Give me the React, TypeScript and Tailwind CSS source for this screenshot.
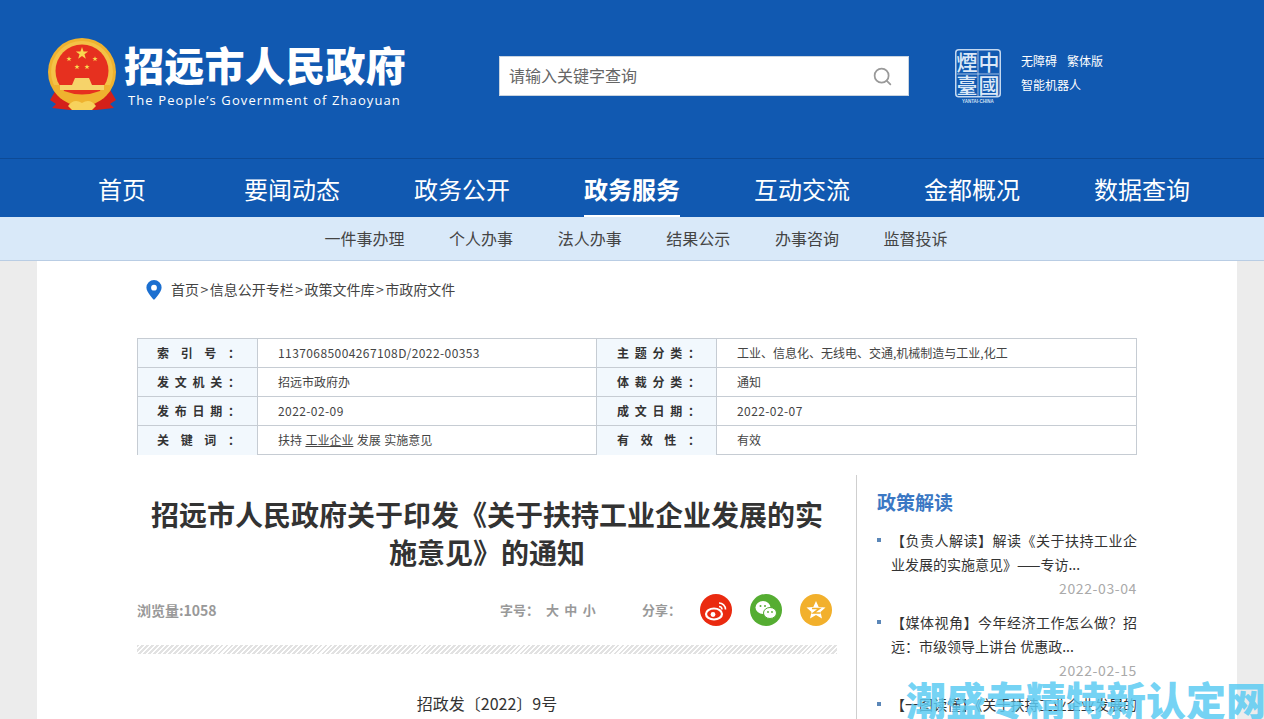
import type { ReactNode } from "react";
import { Search } from "lucide-react";

const nav = ["首页", "要闻动态", "政务公开", "政务服务", "互动交流", "金都概况", "数据查询"];
const sub = ["一件事办理", "个人办事", "法人办事", "结果公示", "办事咨询", "监督投诉"];
const crumbs = ["首页", "信息公开专栏", "政策文件库", "市政府文件"];

function Emblem() {
  const star = (cx: number, cy: number, r: number) => {
    const pts: string[] = [];
    for (let i = 0; i < 10; i++) {
      const a = -Math.PI / 2 + (i * Math.PI) / 5;
      const rr = i % 2 ? r * 0.4 : r;
      pts.push(`${cx + rr * Math.cos(a)},${cy + rr * Math.sin(a)}`);
    }
    return <polygon points={pts.join(" ")} fill="#f9d84f" />;
  };
  return (
    <svg width="70" height="74" viewBox="0 0 70 74" className="shrink-0">
      <path d="M9 50 L2 62 L8 66 L4 70 L22 72 L48 72 L66 70 L62 66 L68 62 L61 50 Z" fill="#d4201a" />
      <circle cx="34" cy="34" r="34" fill="#efb22f" />
      <circle cx="34" cy="34" r="31" fill="#f7cf5b" opacity="0.55" />
      <circle cx="34" cy="33" r="26.500" fill="#e6301f" />
      <path d="M6 47 H62 L56 60 Q34 72 12 60 Z" fill="#efb22f" />
      <path d="M14 47 H54 L52 53 Q34 60 16 53 Z" fill="#e6301f" />
      {star(34, 15.500, 6.500)}
      {star(21, 21, 2.800)}
      {star(29, 29, 2.800)}
      {star(39, 29, 2.800)}
      {star(47, 21, 2.800)}
      <path d="M24 47 L27 40 L41 40 L44 47 Z" fill="#f6d36a" />
      <rect x="12" y="47" width="44" height="5" fill="#f6d36a" />
      <path d="M20 68 Q26 60 34 65 Q42 60 48 68 L44 72 L24 72 Z" fill="#f7d25c" />
    </svg>
  );
}

function Seal() {
  const f = "'Noto Sans CJK TC', sans-serif";
  return (
    <svg width="46" height="54" viewBox="0 0 46 54" className="shrink-0">
      <rect x="0.750" y="0.750" width="44.500" height="47" rx="3" fill="none" stroke="#c4d8f0" strokeWidth="1.500" />
      <path d="M23 2V47M2 25H44" stroke="#c4d8f0" strokeWidth="0.800" />
      <text x="12" y="21" fontSize="21" fontWeight="500" fill="#dce8f7" textAnchor="middle" fontFamily={f}>煙</text>
      <text x="34" y="21" fontSize="21" fontWeight="500" fill="#dce8f7" textAnchor="middle" fontFamily={f}>中</text>
      <text x="12" y="44" fontSize="21" fontWeight="500" fill="#dce8f7" textAnchor="middle" fontFamily={f}>臺</text>
      <text x="34" y="44" fontSize="21" fontWeight="500" fill="#dce8f7" textAnchor="middle" fontFamily={f}>國</text>
      <text x="23" y="53.500" fontSize="4.500" fill="#cfe0f5" textAnchor="middle" fontFamily="'Liberation Sans', sans-serif" fontWeight="700">YANTAI·CHINA</text>
    </svg>
  );
}

function Label({ chars, right }: { chars: string[]; right?: boolean }) {
  return (
    <div className={`flex w-[119px] shrink-0 justify-between bg-[#f2f8fd] font-bold leading-[28px] text-[#333] ${right ? "pl-[20px] pr-[16px]" : "pl-[19px] pr-[17px]"}`}>
      {chars.map((c, i) => (
        <span key={i}>{c}</span>
      ))}
    </div>
  );
}

function Row({ a, b, c, d, last, num }: { a: string[]; b: ReactNode; c: string[]; d: string; last?: boolean; num?: boolean }) {
  return (
    <div className={`flex h-[29px] ${last ? "" : "border-b border-[#c6ccd3]"}`}>
      <Label chars={a} />
      <div className={`w-[340px] shrink-0 border-x border-[#c6ccd3] pl-5 leading-[28px] ${num ? "tracking-[0.41px]" : ""}`}>{b}</div>
      <Label chars={c} right />
      <div className={`flex-1 border-l border-[#c6ccd3] pl-5 leading-[28px] ${num && d.startsWith("2022") ? "tracking-[0.41px]" : ""}`}>{d}</div>
    </div>
  );
}

function Item({ text, date }: { text: string; date?: string }) {
  return (
    <li className="relative mb-[10px] pl-[14px] text-[14px] leading-[24px] text-[#333]">
      <span className="absolute left-0 top-[10px] h-1 w-1 bg-[#5b87b8]" />
      <p className="text-justify">{text}</p>
      {date && <p className="text-right tracking-[0.6px] text-[#aaa]">{date}</p>}
    </li>
  );
}

export default function App() {
  return (
    <div className="relative h-[719px] overflow-hidden bg-[#ececec] font-['Microsoft_YaHei','Noto_Sans_CJK_SC',sans-serif] text-[#333]">
      <header className="flex h-[158px] bg-[#1159b1] pl-[48px] pt-[38px]">
        <Emblem />
        <div className="ml-[6px] w-[300px] text-white">
          <div className="mt-[-2px] whitespace-nowrap text-[40px] font-black leading-[56px] tracking-[0.3px]">招远市人民政府</div>
          <div className="ml-[4px] mt-[-2px] whitespace-nowrap font-['Open_Sans',sans-serif] text-[13px] font-medium leading-[20px] tracking-[1.1px]">The People’s Government of Zhaoyuan</div>
        </div>
        <div className="ml-[75px] mt-[18px] flex h-[40px] w-[410px] items-center justify-between border border-[#c9d4e0] bg-white pl-[9px] pr-[15px]">
          <span className="mt-[-2px] text-[16px] text-[#666]">请输入关键字查询</span>
          <Search size={21} strokeWidth={2} className="text-[#999]" />
        </div>
        <div className="ml-[46px] mt-[11px]">
          <Seal />
        </div>
        <div className="ml-[20px] mt-[11px] text-[12px] leading-[24px] text-white">
          <div className="flex gap-[10px]">
            <span>无障碍</span>
            <span>繁体版</span>
          </div>
          <div>智能机器人</div>
        </div>
      </header>

      <nav className="flex h-[59px] border-t border-[#0d4a96] bg-[#1159b1] pl-[37px] text-[24px] text-white">
        {nav.map((n, i) => (
          <div key={n} className="flex w-[170px] justify-center">
            <span className={`h-[58px] leading-[60px] ${i === 3 ? "border-b-2 border-white font-bold" : ""}`}>{n}</span>
          </div>
        ))}
      </nav>

      <div className="flex h-[44px] items-center justify-center gap-[44.6px] border-b border-[#b9cde4] bg-[#d9e9f9] pb-[2px] pl-[8px] text-[16px] text-[#444]">
        {sub.map((s) => (
          <span key={s}>{s}</span>
        ))}
      </div>

      <main className="ml-[37px] h-[500px] w-[1200px] bg-white px-[100px]">
        <div className="flex h-[77px] items-start pl-[9px] pt-[18px]">
          <svg width="16" height="20" viewBox="0 0 16 20" className="mt-[1px]">
            <path fillRule="evenodd" d="M8 0a7.600 7.600 0 0 0-7.600 7.600C.4 12.500 8 20 8 20s7.600-7.500 7.600-12.400A7.600 7.600 0 0 0 8 0Zm0 4.800a2.900 2.900 0 1 1 0 5.800 2.900 2.900 0 0 1 0-5.800Z" fill="#1b6fd0" />
          </svg>
          <div className="ml-[9px] mt-[-1px] flex text-[14px] leading-[22px] text-[#444]">
            {crumbs.map((c, i) => (
              <span key={c}>
                {i > 0 && <span className="mx-[1.500px]">&gt;</span>}
                {c}
              </span>
            ))}
          </div>
        </div>

        <div className="h-[117px] border border-[#c6ccd3] text-[12px] text-[#444]">
          <Row num a={["索", "引", "号", "："]} b="11370685004267108D/2022-00353" c={["主", "题", "分", "类", "："]} d="工业、信息化、无线电、交通,机械制造与工业,化工" />
          <Row a={["发", "文", "机", "关", "："]} b="招远市政府办" c={["体", "裁", "分", "类", "："]} d="通知" />
          <Row num a={["发", "布", "日", "期", "："]} b="2022-02-09" c={["成", "文", "日", "期", "："]} d="2022-02-07" />
          <Row
            last
            a={["关", "键", "词", "："]}
            b={
              <span className="[word-spacing:0.7px]">
                扶持 <span className="underline">工业企业</span> 发展 实施意见
              </span>
            }
            c={["有", "效", "性", "："]}
            d="有效"
          />
        </div>

        <div className="mt-[20px] flex">
          <article className="w-[700px] shrink-0">
            <h1 className="mt-[20px] px-[12px] text-center text-[28px] font-bold leading-[38px] text-[#333]">招远市人民政府关于印发《关于扶持工业企业发展的实施意见》的通知</h1>
            <div className="mt-[21px] flex h-[36px] items-center text-[14px] font-bold text-[#999]">
              <span className="w-[363px]">浏览量:1058</span>
              <span className="w-[46px] text-[13px]">字号：</span>
              <span className="w-[96px] text-[13px] tracking-[1.2px]">大 中 小</span>
              <span className="w-[58px] text-[13px]">分享：</span>
              <div className="flex gap-[18px]">
                <svg width="32" height="32" viewBox="0 0 32 32">
                  <circle cx="16" cy="16" r="16" fill="#ea2a10" />
                  <ellipse cx="14" cy="20" rx="8" ry="5.500" fill="none" stroke="#fff" strokeWidth="2.200" />
                  <circle cx="13" cy="20.500" r="2.400" fill="#fff" />
                  <path d="M19 9a6.500 6.500 0 0 1 6.500 6.500M19 12.500a3 3 0 0 1 3 3" fill="none" stroke="#fff" strokeWidth="1.600" />
                </svg>
                <svg width="32" height="32" viewBox="0 0 32 32">
                  <circle cx="16" cy="16" r="16" fill="#55ad32" />
                  <ellipse cx="13" cy="13.500" rx="7.500" ry="6.500" fill="#fff" />
                  <ellipse cx="20" cy="19" rx="6.500" ry="5.500" fill="#fff" stroke="#55ad32" />
                  <circle cx="10.500" cy="12" r="1" fill="#55ad32" />
                  <circle cx="15" cy="12" r="1" fill="#55ad32" />
                  <circle cx="18" cy="18" r="0.900" fill="#55ad32" />
                  <circle cx="22" cy="18" r="0.900" fill="#55ad32" />
                </svg>
                <svg width="32" height="32" viewBox="0 0 32 32">
                  <circle cx="16" cy="16" r="16" fill="#f2b02c" />
                  <polygon points="16,7 18.700,13 25.500,13.500 20.500,18 22,24.500 16,21 10,24.500 11.500,18 6.500,13.500 13.300,13" fill="#fff" />
                  <path d="M12 14.500h7.500l-6 4.500h7" fill="none" stroke="#f2b02c" strokeWidth="1.600" />
                </svg>
              </div>
            </div>
            <div className="mt-[17px] h-[9px] bg-[repeating-linear-gradient(135deg,#e2e2e2_0,#e2e2e2_2px,#ffffff_2px,#ffffff_3.500px)]" />
            <p className="mt-[37px] text-center text-[16px] leading-[24px] text-[#333]">招政发〔2022〕9号</p>
          </article>
          <aside className="ml-[19px] flex-1 border-l border-[#cfcfcf] pl-[20px]">
            <h2 className="mt-[13px] text-[19px] font-bold leading-[28px] text-[#3b78c4]">政策解读</h2>
            <ul className="mt-[12px]">
              <Item text="【负责人解读】解读《关于扶持工业企业发展的实施意见》——专访..." date="2022-03-04" />
              <Item text="【媒体视角】今年经济工作怎么做？招远：市级领导上讲台 优惠政..." date="2022-02-15" />
              <Item text="【一图读懂】《关于扶持工业企业发展的实施意见》" />
            </ul>
          </aside>
        </div>
      </main>

      <div className="absolute bottom-[-4px] right-[-2px] whitespace-nowrap text-[40px] font-black leading-[48px] text-[#5ccbf3]/85">潮盛专精特新认定网</div>
    </div>
  );
}
